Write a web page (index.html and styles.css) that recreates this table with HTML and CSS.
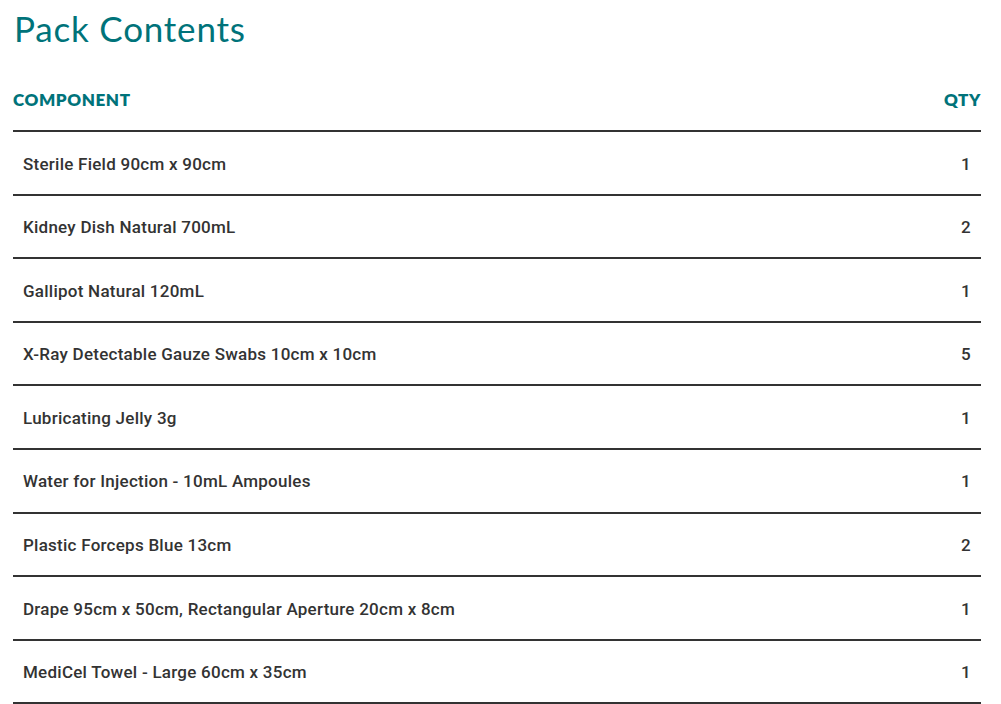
FILE: index.html
```html
<!DOCTYPE html>
<html lang="en">
<head>
<meta charset="utf-8">
<title>Pack Contents</title>
<link rel="stylesheet" href="styles.css">
</head>
<body>
<main class="pack">
  <h1 class="pack-title">Pack Contents</h1>
  <table class="pack-table">
    <thead>
      <tr>
        <th class="col-name">COMPONENT</th>
        <th class="col-qty">QTY</th>
      </tr>
    </thead>
    <tbody>
      <tr><td class="col-name">Sterile Field 90cm x 90cm</td><td class="col-qty">1</td></tr>
      <tr><td class="col-name">Kidney Dish Natural 700mL</td><td class="col-qty">2</td></tr>
      <tr><td class="col-name">Gallipot Natural 120mL</td><td class="col-qty">1</td></tr>
      <tr><td class="col-name">X-Ray Detectable Gauze Swabs 10cm x 10cm</td><td class="col-qty">5</td></tr>
      <tr><td class="col-name">Lubricating Jelly 3g</td><td class="col-qty">1</td></tr>
      <tr><td class="col-name">Water for Injection - 10mL Ampoules</td><td class="col-qty">1</td></tr>
      <tr><td class="col-name">Plastic Forceps Blue 13cm</td><td class="col-qty">2</td></tr>
      <tr><td class="col-name">Drape 95cm x 50cm, Rectangular Aperture 20cm x 8cm</td><td class="col-qty">1</td></tr>
      <tr><td class="col-name">MediCel Towel - Large 60cm x 35cm</td><td class="col-qty">1</td></tr>
    </tbody>
  </table>
</main>
</body>
</html>
```

FILE: styles.css
```css
html, body {
  margin: 0;
  padding: 0;
  background: #ffffff;
}

.pack {
  padding: 6.5px 20px 0 13px;
  font-family: Roboto, "Liberation Sans", sans-serif;
  color: #333333;
}

.pack-title {
  margin: 0 0 0 1px;
  font-family: Lato, "Open Sans", sans-serif;
  font-weight: 400;
  font-size: 35px;
  line-height: 42px;
  letter-spacing: 0.8px;
  color: #00737a;
}

.pack-table {
  width: 100%;
  margin-top: 41.5px;
  border-collapse: separate;
  border-spacing: 0;
}

.pack-table th {
  padding: 0 0 20px;
  font-family: Lato, "Open Sans", sans-serif;
  font-weight: 800;
  font-size: 17px;
  line-height: 20px;
  letter-spacing: 0.6px;
  color: #00737a;
  border-bottom: 2px solid #333333;
}

.pack-table td {
  padding: 21.5px 10px 18.5px;
  font-size: 17px;
  font-weight: 500;
  line-height: 21.6px;
  letter-spacing: 0.25px;
  border-bottom: 2px solid #333333;
}

.col-name {
  text-align: left;
}

.col-qty {
  text-align: right;
}
```
